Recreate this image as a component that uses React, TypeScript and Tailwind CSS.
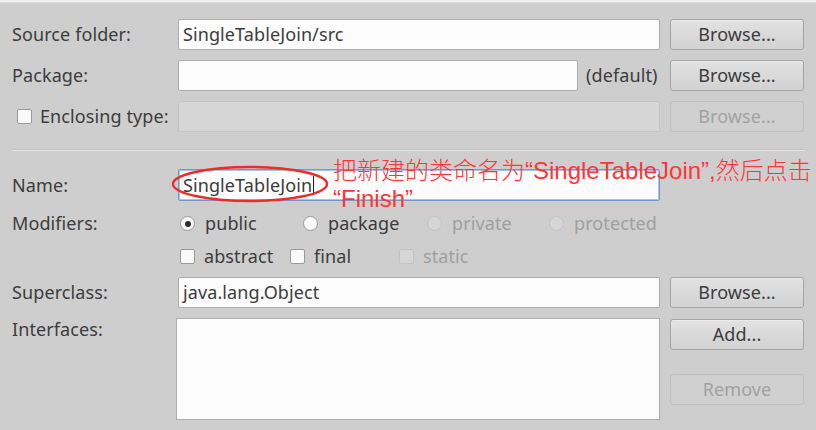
const font = { fontFamily: '"Noto Sans", "Open Sans", sans-serif', letterSpacing: '0.1px' }

function Button({ label, disabled = false }: { label: string; disabled?: boolean }) {
  return (
    <div
      className={`h-[31px] w-[134px] rounded-[3px] border flex items-center justify-center ${
        disabled
          ? 'border-[#bdbdbd] bg-[#d0d0d0] text-[#a2a2a2]'
          : 'border-[#a5a5a5] bg-gradient-to-b from-[#e2e2e2] to-[#d2d2d2] text-[#3c3c3c] shadow-[inset_0_1px_0_#ececec]'
      }`}
    >
      {label}
    </div>
  )
}

function Field({ value = '', disabled = false, className = '' }: { value?: string; disabled?: boolean; className?: string }) {
  return (
    <div
      className={`h-[31px] rounded-[2px] border flex items-center px-[4px] text-[#3c3c3c] ${
        disabled ? 'border-[#c4c4c4] bg-[#d6d6d6]' : 'border-[#adadad] bg-[#fcfcfc]'
      } ${className}`}
    >
      {value}
    </div>
  )
}

function Radio({ label, checked = false, disabled = false }: { label: string; checked?: boolean; disabled?: boolean }) {
  return (
    <div className={`flex items-center gap-[10px] ${disabled ? 'text-[#a0a0a0]' : 'text-[#3c3c3c]'}`}>
      <span
        className={`w-[15px] h-[15px] rounded-full border flex items-center justify-center ${
          disabled ? 'border-[#c2c2c2] bg-[#d6d6d6]' : 'border-[#9a9a9a] bg-[#fafafa]'
        }`}
      >
        {checked && <span className="w-[6px] h-[6px] rounded-full bg-[#2e2e2e]" />}
      </span>
      <span>{label}</span>
    </div>
  )
}

function Check({ label, disabled = false }: { label: string; disabled?: boolean }) {
  return (
    <div className={`flex items-center gap-[9px] ${disabled ? 'text-[#a0a0a0]' : 'text-[#3c3c3c]'}`}>
      <span
        className={`w-[15px] h-[15px] rounded-[2px] border ${
          disabled ? 'border-[#c2c2c2] bg-[#d6d6d6]' : 'border-[#9a9a9a] bg-[#fafafa]'
        }`}
      />
      <span>{label}</span>
    </div>
  )
}

const row = 'grid grid-cols-[156px_482px_134px] gap-x-[10px] pl-[12px] items-center'

export default function App() {
  return (
    <div className="relative w-[816px] h-[430px] overflow-hidden bg-[#cecece] text-[18px] text-[#3c3c3c]" style={font}>
      <div className="h-[3px] bg-[#efefef] border-b border-[#d9d9d9]" />

      <div className={`${row} mt-[16px]`}>
        <span>Source folder:</span>
        <Field value="SingleTableJoin/src" />
        <Button label="Browse..." />
      </div>

      <div className={`${row} mt-[10px]`}>
        <span>Package:</span>
        <div className="flex items-center gap-[8px]">
          <Field className="w-[400px]" />
          <span>(default)</span>
        </div>
        <Button label="Browse..." />
      </div>

      <div className={`${row} mt-[10px]`}>
        <div className="flex items-center gap-[8px] pl-[5px] whitespace-nowrap">
          <span className="shrink-0 w-[15px] h-[15px] rounded-[2px] border border-[#9a9a9a] bg-[#fafafa]" />
          <span>Enclosing type:</span>
        </div>
        <Field disabled />
        <Button label="Browse..." disabled />
      </div>

      <div className="ml-[12px] mr-[11px] mt-[17px] h-[2px] bg-[#e4e4e4] border-t border-[#c4c4c4]" />

      <div className={`${row} mt-[18px]`}>
        <span>Name:</span>
        <div className="h-[32px] rounded-[2px] border border-[#6d98c9] bg-[#fcfcfc] flex items-center px-[4px] shadow-[inset_0_0_0_1px_#a9c4e4]">
          SingleTableJoin<span className="w-px h-[19px] bg-[#222] ml-px" />
        </div>
        <div />
      </div>

      <div className={`${row} mt-[6px] h-[33px]`}>
        <span>Modifiers:</span>
        <div className="flex items-center pl-[2px]">
          <div className="w-[123px]"><Radio label="public" checked /></div>
          <div className="w-[124px]"><Radio label="package" /></div>
          <div className="w-[122px]"><Radio label="private" disabled /></div>
          <Radio label="protected" disabled />
        </div>
        <div />
      </div>

      <div className={`${row} h-[33px]`}>
        <span />
        <div className="flex items-center pl-[2px]">
          <div className="w-[110px]"><Check label="abstract" /></div>
          <div className="w-[109px]"><Check label="final" /></div>
          <Check label="static" disabled />
        </div>
        <div />
      </div>

      <div className={`${row} mt-[4px]`}>
        <span>Superclass:</span>
        <Field value="java.lang.Object" className="h-[30px]" />
        <Button label="Browse..." />
      </div>

      <div className={`${row} mt-[10px] items-start`}>
        <span className="leading-[22px]">Interfaces:</span>
        <div className="h-[102px] -ml-[2px] w-[484px] border border-[#adadad] bg-[#fcfcfc]" />
        <div className="flex flex-col gap-[24px] mt-px">
          <Button label="Add..." />
          <Button label="Remove" disabled />
        </div>
      </div>

      {/* annotation overlay */}
      <svg className="absolute left-[171px] top-[165px]" width="158" height="38" viewBox="0 0 158 38">
        <ellipse cx="79" cy="19" rx="77" ry="17" fill="none" stroke="#ee2b2b" strokeWidth="2.4" />
      </svg>
      <div
        className="absolute left-[333px] top-[157px] text-[24px] leading-[28px] text-[#ff3535] whitespace-nowrap"
        style={{ fontFamily: '"Liberation Sans", "Noto Sans CJK SC", sans-serif', fontWeight: 300, letterSpacing: 0 }}
      >
        <div>把新建的类命名为“SingleTableJoin”,然后点击</div>
        <div>“Finish”</div>
      </div>
    </div>
  )
}
